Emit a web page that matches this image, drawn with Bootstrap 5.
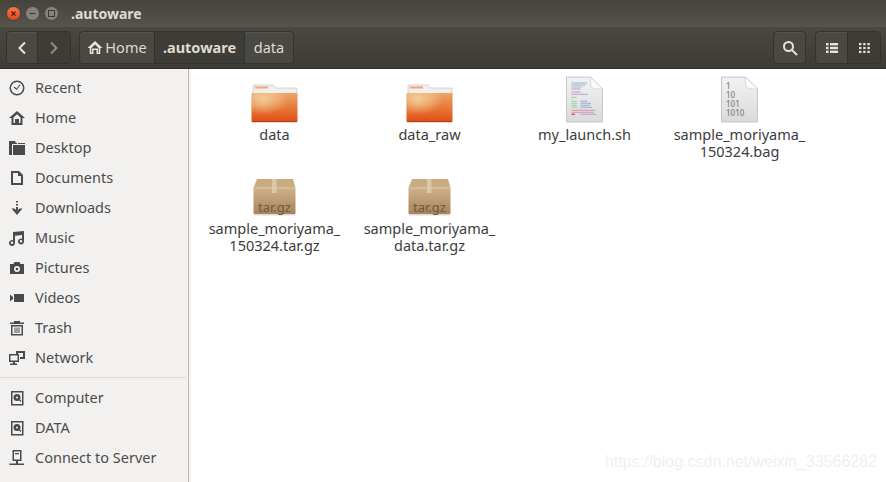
<!DOCTYPE html>
<html lang="en">

<head>
  <meta charset="UTF-8" />
  <meta name="viewport" content="width=device-width, initial-scale=1.0" />
  <title>.autoware</title>
  <link href="https://cdn.jsdelivr.net/npm/bootstrap@5.3.0/dist/css/bootstrap.min.css" rel="stylesheet" />
  <style>
    html, body { height: 100%; }
    body {
      overflow: hidden;
      background: #fff;
      font-family: "Noto Sans", "Open Sans", sans-serif;
      font-size: 14.5px;
      color: #3c3c3c;
    }

    .win-frame { height: 482px; width: 886px; }

    .title-strip {
      height: 27px;
      background: linear-gradient(#45433c, #57544c);
      color: #dfdbd2;
      font-weight: 700;
      font-size: 14px;
      padding-left: 6px;
    }
    .win-dot { width: 15px; height: 15px; flex: none; border-radius: 50%; background: #85837b; border: 1px solid #46443e; }
    .win-dot svg { display: block; }
    .win-close { background: linear-gradient(#f2794a, #dd4a1c); }
    .win-title { margin-left: 8px; }

    .tool-strip {
      height: 42px;
      background: linear-gradient(#4a4842, #3d3b36);
      border-bottom: 1px solid #2f2d2a;
      padding: 0 5px 0 6px;
      color: #dfdbd2;
    }
    .tool-group { display: flex; height: 33px; border: 1px solid #33322d; border-radius: 4px; background: #4a4842; box-shadow: inset 0 1px 0 #55534c; overflow: hidden; }
    .tool-btn { display: flex; align-items: center; justify-content: center; height: 100%; border-right: 1px solid #33312d; font-size: 14.5px; }
    .tool-btn:last-child { border-right: 0; }
    .tool-btn.on { background: #3e3c37; }
    .nav-back, .nav-fwd { width: 32px; }
    .nav-back { width: 31px; }
    .crumb-home { width: 75px; gap: 2px; }
    .crumb-auto { width: 90px; font-weight: 700; }
    .crumb-data { width: 48px; }
    .view-btn { width: 32px; }
    .search-group { margin-left: auto; margin-right: 9px; width: 33px; }

    .body-row { height: 413px; }
    .side-pane {
      width: 191px;
      flex: none;
      background: #f6f5f4;
      padding-right: 2px;
    }
    .side-inner {
      height: 100%;
      background: #f2f1f0;
      border-right: 1px solid #b8b7b4;
      padding-top: 4px;
    }
    .side-item { height: 30px; display: flex; align-items: center; padding-left: 9px; color: #4c4c4c; }
    .side-item svg { width: 16px; height: 16px; flex: none; margin-right: 10px; fill: #4a4a4a; }
    .side-sep { border-top: 1px solid #dcdbd9; margin: 4px 2px 5px 0; }

    .file-grid {
      flex: 1;
      display: grid;
      grid-template-columns: repeat(4, 155px);
      grid-auto-rows: 94px;
      padding: 6px 0 0 6px;
      position: relative;
    }
    .file-cell { text-align: center; line-height: 17px; color: #3c3c3c; }
    .file-cell svg { display: block; margin: 0 auto 3px; width: 48px; height: 48px; }
    .water-mark {
      position: absolute;
      right: 9px;
      bottom: 8px;
      color: #f0f0f0;
      font-family: "Liberation Sans", sans-serif;
      font-size: 16px;
    }
  </style>
</head>

<body>
  <svg width="0" height="0" class="position-absolute">
    <defs>
      <linearGradient id="folderFill" x1="0" y1="0" x2="0" y2="1">
        <stop offset="0" stop-color="#eda56c" />
        <stop offset="0.5" stop-color="#e67a3a" />
        <stop offset="1" stop-color="#e24c14" />
      </linearGradient>
      <radialGradient id="folderGlow" cx="0.25" cy="0.2" r="0.55">
        <stop offset="0" stop-color="#f2cd96" />
        <stop offset="1" stop-color="#f2cd96" stop-opacity="0" />
      </radialGradient>
      <linearGradient id="boxFill" x1="0" y1="0" x2="0" y2="1">
        <stop offset="0" stop-color="#cfb28a" />
        <stop offset="1" stop-color="#a5845a" />
      </linearGradient>
      <linearGradient id="pageFill" x1="0" y1="0" x2="0" y2="1">
        <stop offset="0" stop-color="#f2f2f2" />
        <stop offset="1" stop-color="#dadada" />
      </linearGradient>

      <symbol id="i-folder" viewBox="0 0 48 48">
        <path d="M2 10h20l3 3h21v8H2z" fill="#f1efec" stroke="#c9c6c0" stroke-width=".7" />
        <rect x="4" y="11.500" width="13" height="2" fill="#f0a678" />
        <rect x="0.500" y="18" width="46" height="29" rx="1" fill="url(#folderFill)" />
        <rect x="0.500" y="18" width="46" height="29" rx="1" fill="url(#folderGlow)" />
        <rect x="1" y="46" width="45" height="1.200" fill="#a83e16" />
      </symbol>

      <symbol id="i-box" viewBox="0 0 48 48">
        <path d="M6 10h36l2.500 9h-42z" fill="#c9ab81" />
        <rect x="2.500" y="18.500" width="42" height="26.500" rx="1" fill="url(#boxFill)" />
        <rect x="21" y="10" width="4.500" height="14" fill="#dcc6a5" />
        <rect x="2.500" y="18.500" width="42" height=".8" fill="#e0ccb0" />
        <rect x="3" y="45" width="41" height="1.500" fill="#dedad3" />
      </symbol>

      <symbol id="i-page" viewBox="0 0 48 48">
        <path d="M5.500 2h24l12 12v33h-36z" fill="url(#pageFill)" stroke="#bdbdbd" stroke-width=".8" />
        <path d="M29.500 2c0 6 0 9 1 10.500 2 1.500 6 1.500 11 1.500z" fill="#fbfbfb" stroke="#c6c6c6" stroke-width=".6" />
      </symbol>
    </defs>
  </svg>

  <div class="win-frame d-flex flex-column">
    <div class="title-strip d-flex align-items-center gap-1">
      <span class="win-dot win-close"><svg viewBox="0 0 13 13"><path d="M4.500 4.500l4 4M8.500 4.500l-4 4" stroke="#5a1c08" stroke-width="1.200" /></svg></span>
      <span class="win-dot"><svg viewBox="0 0 13 13"><path d="M3.500 6.500h6" stroke="#3c3a35" stroke-width="1.200" /></svg></span>
      <span class="win-dot"><svg viewBox="0 0 13 13"><rect x="3.500" y="3.500" width="6" height="6" fill="none" stroke="#3c3a35" /></svg></span>
      <span class="win-title">.autoware</span>
    </div>

    <div class="tool-strip d-flex align-items-center">
      <div class="tool-group me-2">
        <div class="tool-btn nav-back"><svg width="10" height="14" viewBox="0 0 10 14"><path d="M8 1.500L2.500 7 8 12.500" fill="none" stroke="#e6e3db" stroke-width="2" /></svg></div>
        <div class="tool-btn nav-fwd on"><svg width="10" height="14" viewBox="0 0 10 14"><path d="M2 1.500L7.500 7 2 12.500" fill="none" stroke="#8e8c85" stroke-width="2" /></svg></div>
      </div>
      <div class="tool-group">
        <div class="tool-btn crumb-home">
          <svg width="16" height="15" viewBox="0 0 16 15"><path d="M8 1L.5 8h2.200v6h3.800v-4h3v4h3.800V8h2.200z" fill="#e6e3db" /><path d="M4.300 8.200L8 4.600l3.700 3.600v4.300h-.7v-4H5v4h-.7z" fill="#4a4842" /></svg>
          <span>Home</span>
        </div>
        <div class="tool-btn crumb-auto on">.autoware</div>
        <div class="tool-btn crumb-data">data</div>
      </div>
      <div class="tool-group search-group">
        <div class="tool-btn w-100"><svg width="16" height="16" viewBox="0 0 16 16"><circle cx="6.500" cy="6.500" r="4.500" fill="none" stroke="#e6e3db" stroke-width="2" /><path d="M10 10l5 5" stroke="#e6e3db" stroke-width="2" /></svg></div>
      </div>
      <div class="tool-group">
        <div class="tool-btn view-btn"><svg width="12" height="10" viewBox="0 0 12 10" fill="#e6e3db"><rect width="2.600" height="2.400" /><rect x="4" width="8" height="2.400" /><rect y="3.800" width="2.600" height="2.400" /><rect x="4" y="3.800" width="8" height="2.400" /><rect y="7.600" width="2.600" height="2.400" /><rect x="4" y="7.600" width="8" height="2.400" /></svg></div>
        <div class="tool-btn view-btn on"><svg width="11" height="10" viewBox="0 0 11 10" fill="#e6e3db"><rect width="2.400" height="2.200" /><rect x="4.200" width="2.400" height="2.200" /><rect x="8.400" width="2.400" height="2.200" /><rect y="3.900" width="2.400" height="2.200" /><rect x="4.200" y="3.900" width="2.400" height="2.200" /><rect x="8.400" y="3.900" width="2.400" height="2.200" /><rect y="7.800" width="2.400" height="2.200" /><rect x="4.200" y="7.800" width="2.400" height="2.200" /><rect x="8.400" y="7.800" width="2.400" height="2.200" /></svg></div>
      </div>
    </div>

    <div class="body-row d-flex">
      <div class="side-pane">
        <div class="side-inner">
          <div class="side-item"><svg viewBox="0 0 16 16"><path fill-rule="evenodd" d="M8 .5a7.500 7.500 0 1 0 0 15 7.500 7.500 0 0 0 0-15zm0 1.500a6 6 0 1 1 0 12 6 6 0 0 1 0-12z" /><path d="M4.600 7.400l.8-.8L7.500 8.400l3.200-4 .9.700-4 5z" /></svg>Recent</div>
          <div class="side-item"><svg viewBox="0 0 16 16"><path fill-rule="evenodd" d="M8 1L0 8h2.500v7h11V8H16zM4.500 7.500L8 4.300l3.500 3.200V13H10V9H6v4H4.500z" /></svg>Home</div>
          <div class="side-item"><svg viewBox="0 0 16 16"><path d="M0 1h6l1 2h1v1H3v11H0z" /><path d="M4 5h12v10H4z" /><path d="M9 3h7v1H9z" /></svg>Desktop</div>
          <div class="side-item"><svg viewBox="0 0 16 16"><path fill-rule="evenodd" d="M2 1h8l4 4v10H2zm2 2v10h8V6H9V3z" /></svg>Documents</div>
          <div class="side-item"><svg viewBox="0 0 16 16"><path d="M7 1h2v1.500H7zM7 4h2v1.500H7zM7 7h2v3.500H7zM2.500 8.500h3L8 11l2.500-2.500h3L8 15z" /></svg>Downloads</div>
          <div class="side-item"><svg viewBox="0 0 16 16"><path fill-rule="evenodd" d="M4 2l11-1v10.500a3 3 0 1 1-2-2.800V5L6 5.700v7.300a3 3 0 1 1-2-2.800zM3 11.500a1.300 1.300 0 1 0 0 2.600 1.300 1.300 0 0 0 0-2.600zm9-1.500a1.300 1.300 0 1 0 0 2.600 1.300 1.300 0 0 0 0-2.600z" /></svg>Music</div>
          <div class="side-item"><svg viewBox="0 0 16 16"><path fill-rule="evenodd" d="M1 4h3.500l1-2h5l1 2H15v10H1zm7 2a3 3 0 1 0 0 6 3 3 0 0 0 0-6zm0 1.700a1.300 1.300 0 1 1 0 2.600 1.300 1.300 0 0 1 0-2.600z" /></svg>Pictures</div>
          <div class="side-item"><svg viewBox="0 0 16 16"><path d="M5 4h10v8H5zM1 4.500L4 7v2l-3 2.500z" /></svg>Videos</div>
          <div class="side-item"><svg viewBox="0 0 16 16"><path fill-rule="evenodd" d="M5 1h6v1.500h4V4H1V2.500h4zM2 5h12v10.500H2zm1.500 1.500v7.500h9V6.500z" /><path d="M5.500 7.500h1V13h-1zM7.500 7.500h1V13h-1zM9.500 7.500h1V13h-1z" /></svg>Trash</div>
          <div class="side-item"><svg viewBox="0 0 16 16"><path fill-rule="evenodd" d="M0 4h10v8H6v1.500h2V15H1v-1.500h3V12H0zm1.500 1.500v5h7v-5z" /><path d="M7 1h9v8h-5V7h3V3H9v1H7z" /></svg>Network</div>
          <div class="side-sep"></div>
          <div class="side-item"><svg viewBox="0 0 16 16"><path fill-rule="evenodd" d="M2 1h12.500v14.500H2zm1.500 1.500v11.500h9.500V2.500zM8 4a3.500 3.500 0 1 1 0 7 3.500 3.500 0 0 1 0-7zm0 2.500a1 1 0 1 0 0 2 1 1 0 0 0 0-2z" /><path d="M9 9l2.500 3 1-1L10 8.500z" /></svg>Computer</div>
          <div class="side-item"><svg viewBox="0 0 16 16"><path fill-rule="evenodd" d="M2 1h12.500v14.500H2zm1.500 1.500v11.500h9.500V2.500zM8 4a3.500 3.500 0 1 1 0 7 3.500 3.500 0 0 1 0-7zm0 2.500a1 1 0 1 0 0 2 1 1 0 0 0 0-2z" /><path d="M9 9l2.500 3 1-1L10 8.500z" /></svg>DATA</div>
          <div class="side-item"><svg viewBox="0 0 16 16"><path fill-rule="evenodd" d="M3.500 0h9v11h-9zM5 1.500v8h6v-8z" /><path d="M6 3h4v1.200H6zM7 11h2v2.500H7zM.5 13.500h14.500V15H.5z" /></svg>Connect to Server</div>
        </div>
      </div>

      <div class="file-grid">
        <div class="file-cell"><svg><use href="#i-folder" /></svg>data</div>
        <div class="file-cell"><svg><use href="#i-folder" /></svg>data_raw</div>
        <div class="file-cell">
          <svg viewBox="0 0 48 48">
            <use href="#i-page" width="48" height="48" />
            <g stroke-width=".6">
              <path d="M10.500 8h15.700M10.500 10h14M10.500 14h9" stroke="#5b8fb8" />
              <path d="M10.500 12h10.500" stroke="#8a9aa8" />
              <path d="M10.500 17h9" stroke="#d14fc6" />
              <path d="M10.500 19.300h9" stroke="#b86fc0" /><path d="M19.500 19.300h7.300" stroke="#5b8fb8" />
              <path d="M10.500 22.300h5M10.500 24.300h1M10.500 26.300h5M10.500 28.300h5.500M10.500 30.300h5M10.500 32.300h5.500" stroke="#6fbf6a" />
              <path d="M19.500 26.300h6.700M19.500 28.300h10.500M19.500 30.300h9.500M19.500 32.300h11.500" stroke="#5b8fb8" />
              <path d="M10.500 35.300h24M10.500 37.300h22.500" stroke="#e05a9a" />
              <path d="M10.500 39.300h3.500" stroke="#e03a3a" stroke-width="1.200" /><path d="M19.500 39.300h15.500" stroke="#5b8fb8" />
            </g>
          </svg>my_launch.sh
        </div>
        <div class="file-cell">
          <svg viewBox="0 0 48 48">
            <use href="#i-page" width="48" height="48" />
            <g font-size="8" font-weight="500" fill="#808080">
              <text x="10" y="13.500">1</text>
              <text x="10" y="22.500">10</text>
              <text x="10" y="31.500">101</text>
              <text x="10" y="40.500">1010</text>
            </g>
          </svg>sample_moriyama_<br />150324.bag
        </div>
        <div class="file-cell">
          <svg viewBox="0 0 48 48">
            <use href="#i-box" width="48" height="48" />
            <text x="23.500" y="43" text-anchor="middle" font-size="13" fill="#6b5a42">tar.gz</text>
          </svg>sample_moriyama_<br />150324.tar.gz
        </div>
        <div class="file-cell">
          <svg viewBox="0 0 48 48">
            <use href="#i-box" width="48" height="48" />
            <text x="23.500" y="43" text-anchor="middle" font-size="13" fill="#6b5a42">tar.gz</text>
          </svg>sample_moriyama_<br />data.tar.gz
        </div>
        <div class="water-mark">https://blog.csdn.net/weixin_33566282</div>
      </div>
    </div>
  </div>

  <script src="https://cdn.jsdelivr.net/npm/bootstrap@5.3.0/dist/js/bootstrap.bundle.min.js"></script>
</body>

</html>
